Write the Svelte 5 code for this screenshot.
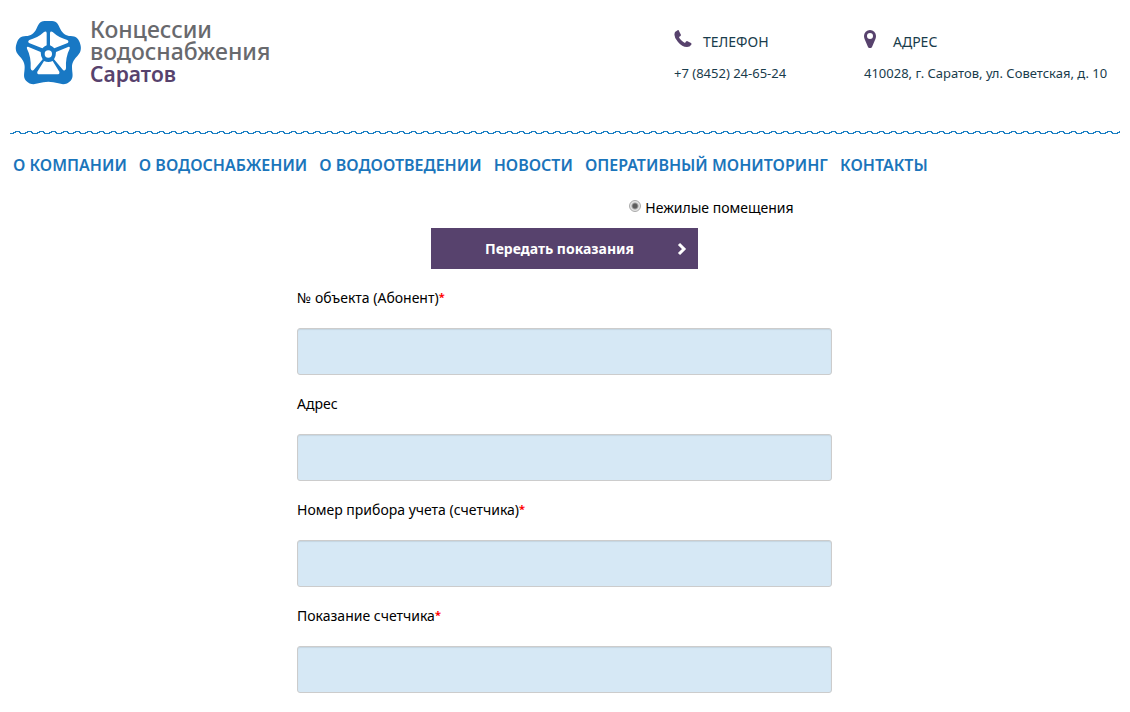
<script>
  const nav = ['О КОМПАНИИ', 'О ВОДОСНАБЖЕНИИ', 'О ВОДООТВЕДЕНИИ', 'НОВОСТИ', 'ОПЕРАТИВНЫЙ МОНИТОРИНГ', 'КОНТАКТЫ'];
  const fields = [
    { id: 'object', label: '№ объекта (Абонент)', required: true },
    { id: 'address', label: 'Адрес', required: false },
    { id: 'meter', label: 'Номер прибора учета (счетчика)', required: true },
    { id: 'reading', label: 'Показание счетчика', required: true }
  ];
  let room = $state('nonresidential');
</script>

<header>
  <a class="logo" href="#top">
    <svg class="valve" viewBox="0 0 228 222" aria-hidden="true">
      <path fill="#1878c4" d="M104 18H126C142 18 145 30 151 42C158 56 168 63 182 63C198 64 205 70 209 82C215 98 214 110 204 121C193 133 186 142 186 156C186 174 192 186 182 197C171 209 158 209 145 205C125 199 105 199 85 205C72 209 59 209 48 197C38 186 44 174 44 156C44 142 37 133 26 121C16 110 15 98 21 82C25 70 32 64 48 63C62 63 72 56 79 42C85 30 88 18 104 18Z" />
      <path fill="#fff" d="M102 51Q109 47 110 54L110 91Q103 94 97 100L57 84Q52 79 58 75Q84 68 102 51ZM128 51Q121 47 120 54L120 91Q127 94 133 100L173 84Q178 79 172 75Q146 68 128 51ZM54 95Q49 94 51 101Q64 126 62 160Q64 170 71 165L98 133Q92 124 92 111ZM176 95Q181 94 179 101Q166 126 168 160Q166 170 159 165L132 133Q138 124 138 111ZM102 138Q115 144 128 138L148 170Q150 178 141 178H89Q80 178 82 170Z" />
      <circle cx="115" cy="117" r="11" fill="#fff" />
    </svg>
    <span class="name">
      <span>Концессии</span>
      <span>водоснабжения</span>
      <span class="city">Саратов</span>
    </span>
  </a>
  <div class="contacts">
    <section>
      <h2>
        <svg width="18" height="18" viewBox="0 0 18 18" aria-hidden="true"><path fill="#57426d" d="M1 2L4 0Q5 0 5 1L7 5Q7 6 5 7Q5 8 7 10Q9 12 11 13Q12 11 13 11L17 13Q18 14 17 15Q16 17 13 17Q8 17 4 12Q-1 7 1 2Z" /></svg>
        ТЕЛЕФОН
      </h2>
      <p>+7 (8452) 24-65-24</p>
    </section>
    <section>
      <h2>
        <svg width="18" height="18" viewBox="0 0 18 18" aria-hidden="true"><path fill="#57426d" fill-rule="evenodd" d="M6 0A6 6 0 0 1 12 6Q12 8 11 10L8 17Q6 20 4 17L1 10Q0 8 0 6A6 6 0 0 1 6 0ZM6 3A3 3 0 1 0 6 9A3 3 0 1 0 6 3Z" /></svg>
        АДРЕС
      </h2>
      <p>410028, г. Саратов, ул. Советская, д. 10</p>
    </section>
  </div>
</header>

<svg class="wave" aria-hidden="true">
  <defs>
    <pattern id="ripple" width="12" height="4" patternUnits="userSpaceOnUse">
      <path d="M0 2h4v1H0zM3 1h3v1H3zM5 0h5v1H5zM9 1h2v1H9zM10 2h2v1h-2z" fill="#1b7fc3" shape-rendering="crispEdges" />
    </pattern>
  </defs>
  <rect width="100%" height="4" fill="url(#ripple)" />
</svg>

<nav>
  {#each nav as item}
    <a href="#top">{item}</a>
  {/each}
</nav>

<main>
  <label class="choice">
    <input type="radio" name="room" value="nonresidential" bind:group={room} />
    Нежилые помещения
  </label>
  <form onsubmit={(e) => e.preventDefault()}>
    <button type="submit">
      <span>Передать показания</span>
      <svg width="10" height="14" viewBox="0 0 10 14" aria-hidden="true"><path d="M2 2L7 7L2 12" fill="none" stroke="#fff" stroke-width="3" /></svg>
    </button>
    {#each fields as f}
      <div class="field">
        <label for={f.id}>{f.label}{#if f.required}<span class="star">*</span>{/if}</label>
        <input id={f.id} type="text" />
      </div>
    {/each}
  </form>
</main>

<style>
  :global(body) {
    background: #fff;
    color: #000;
    font: 14px/20px "Noto Sans", "Open Sans", sans-serif;
  }
  header {
    display: flex;
    justify-content: space-between;
    padding: 15px 18px 0 10px;
    height: 115px;
    box-sizing: border-box;
  }
  .logo {
    display: flex;
    gap: 4px;
    color: #68696d;
    text-decoration: none;
  }
  .valve { width: 76px; height: 74px; }
  .name { padding-top: 3px; font-size: 23px; font-weight: 500; line-height: 22px; }
  .name span { display: block; }
  .name .city { font-size: 21px; font-weight: 600; line-height: 24px; color: #57426d; }
  .contacts {
    display: grid;
    grid-template-columns: 190px 248px;
    padding-top: 15px;
    color: #193c4c;
  }
  h2 {
    display: flex;
    gap: 11px;
    margin: 0;
    font-size: 14px;
    font-weight: 400;
    line-height: 24px;
  }
  p { margin: 9px 0 0; font-size: 13px; line-height: 20px; }
  .wave { display: block; width: calc(100% - 20px); height: 4px; margin: 16px 10px 0; }
  nav {
    display: flex;
    gap: 12px;
    padding: 19px 13px 0;
    font-size: 16px;
    font-weight: 600;
    line-height: 22px;
  }
  nav a { color: #1b75bb; text-decoration: none; white-space: nowrap; }
  main { padding: 22px 1px 0 0; }
  .choice {
    display: flex;
    align-items: center;
    justify-content: center;
    gap: 4px;
    padding-left: 294px;
  }
  .choice input {
    appearance: none;
    width: 12px;
    height: 12px;
    margin: 0 0 4px;
    border: 1px solid #aaa;
    border-radius: 50%;
    background: radial-gradient(circle, #5c5c5c 0 2px, #e4e4e4 4px);
  }
  form { width: 535px; max-width: 94%; margin: 10px auto 0; }
  button {
    display: flex;
    align-items: center;
    justify-content: center;
    width: 267px;
    height: 41px;
    margin: 0 auto 19px;
    padding: 0 11px;
    border: 0;
    background: #57426d;
    color: #fff;
    font: 700 14px/20px "Noto Sans", "Open Sans", sans-serif;
  }
  button span { flex: 1; }
  .field { margin-bottom: 19px; }
  .field label { display: block; margin-bottom: 20px; }
  .star { color: #f00; font-size: 11px; font-weight: 700; line-height: 1; vertical-align: 2px; }
  .field input {
    display: block;
    box-sizing: border-box;
    width: 100%;
    height: 47px;
    padding: 0 12px;
    border: 1px solid #ccc;
    border-radius: 3px;
    background: #d6e8f5;
    box-shadow: inset 0 1px 1px rgba(0, 0, 0, 0.08);
    font: inherit;
  }
</style>
